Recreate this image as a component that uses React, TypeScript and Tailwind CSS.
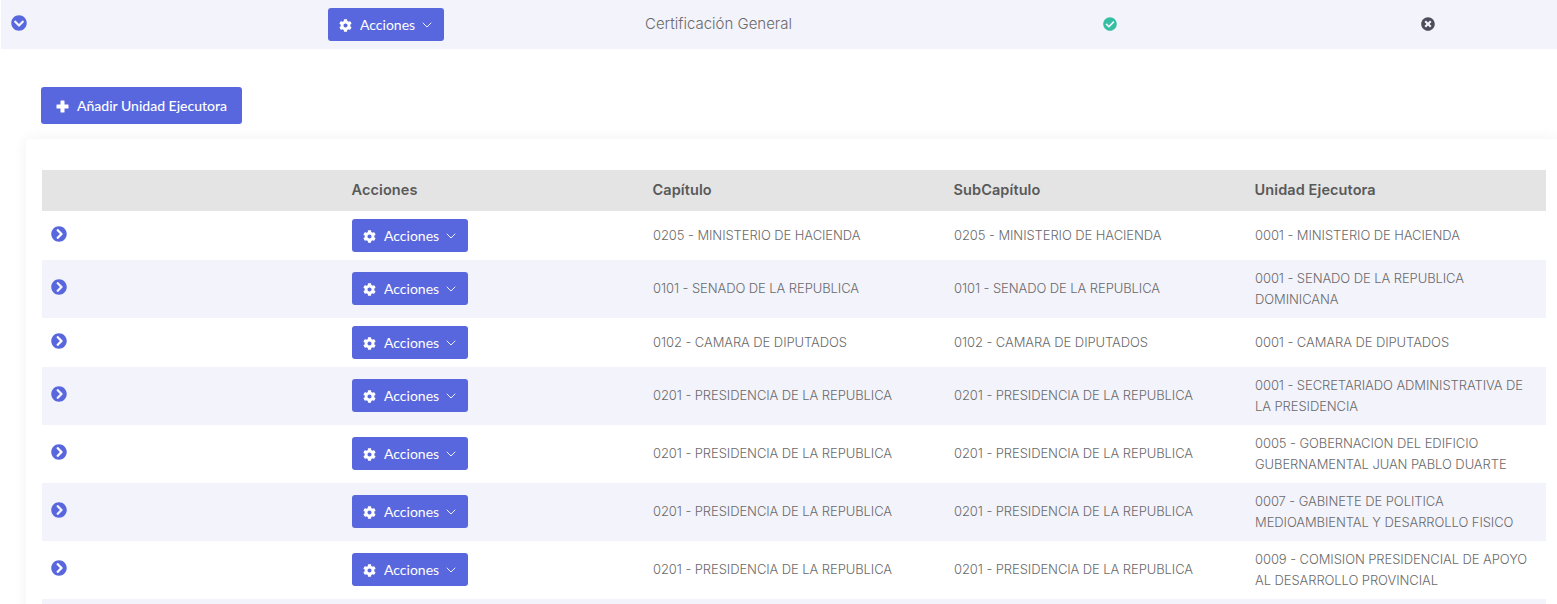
import { FaChevronCircleDown, FaChevronCircleRight, FaCheckCircle, FaTimesCircle, FaCog } from "react-icons/fa";
import { FiChevronDown } from "react-icons/fi";

const rows: { c: string; u: string[]; tall: boolean }[] = [
  { c: "0205 - MINISTERIO DE HACIENDA", u: ["0001 - MINISTERIO DE HACIENDA"], tall: false },
  { c: "0101 - SENADO DE LA REPUBLICA", u: ["0001 - SENADO DE LA REPUBLICA", "DOMINICANA"], tall: true },
  { c: "0102 - CAMARA DE DIPUTADOS", u: ["0001 - CAMARA DE DIPUTADOS"], tall: false },
  { c: "0201 - PRESIDENCIA DE LA REPUBLICA", u: ["0001 - SECRETARIADO ADMINISTRATIVA DE", "LA PRESIDENCIA"], tall: true },
  { c: "0201 - PRESIDENCIA DE LA REPUBLICA", u: ["0005 - GOBERNACION DEL EDIFICIO", "GUBERNAMENTAL JUAN PABLO DUARTE"], tall: true },
  { c: "0201 - PRESIDENCIA DE LA REPUBLICA", u: ["0007 - GABINETE DE POLITICA", "MEDIOAMBIENTAL Y DESARROLLO FISICO"], tall: true },
  { c: "0201 - PRESIDENCIA DE LA REPUBLICA", u: ["0009 - COMISION PRESIDENCIAL DE APOYO", "AL DESARROLLO PROVINCIAL"], tall: true },
];

function AccBtn() {
  return (
    <button className="flex items-center h-[33px] w-[116px] rounded-[3px] bg-[#5867dd] text-white pl-[11px] font-['Lato'] text-[14px]">
      <FaCog className="w-[13px] h-[13px] mt-[2px]" />
      <span className="ml-[8px]">Acciones</span>
      <FiChevronDown className="ml-[4px] w-[16px] h-[16px] opacity-90" strokeWidth={1.5} />
    </button>
  );
}

const cellText = "font-['Inter',sans-serif] font-light text-[13px] tracking-[-0.08px] text-[#6a6a6a] leading-[21px]";

export default function App() {
  return (
    <div className="h-[604px] w-full overflow-hidden bg-white">
      <div className="ml-[1px] h-[49px] bg-[#f3f3fb] grid grid-cols-[327px_317px_1fr_1fr_1fr] items-center">
        <div className="pl-[10px] -mt-[3px]">
          <FaChevronCircleDown className="w-[16px] h-[16px] text-[#5867dd]" />
        </div>
        <div><AccBtn /></div>
        <div className="font-['Inter',sans-serif] font-light text-[15px] text-[#6a6a6a] -mt-[1px]">Certificación General</div>
        <div className="pl-[154px] -mt-[2px]"><FaCheckCircle className="w-[14px] h-[14px] text-[#34bfa3]" /></div>
        <div className="pl-[168px] -mt-[2px]"><FaTimesCircle className="w-[14px] h-[14px] text-[#4b4d5c]" /></div>
      </div>

      <div className="pl-[41px] pt-[38px]">
        <button className="flex items-center h-[37px] w-[201px] rounded-[3px] bg-[#5867dd] text-white pl-[15px] font-['Lato'] text-[14px] font-medium">
          <svg viewBox="0 0 13 13" className="w-[13px] h-[13px] mt-[1px]" fill="currentColor">
            <path d="M5 0.5h3a.5.5 0 0 1 .5.5v3.500H12a.5.5 0 0 1 .5.5v3a.5.5 0 0 1-.5.5H8.500V12a.5.5 0 0 1-.5.5H5a.5.5 0 0 1-.5-.5V8.500H1a.5.5 0 0 1-.5-.5V5a.5.5 0 0 1 .5-.5h3.500V1a.5.5 0 0 1 .5-.5z" />
          </svg>
          <span className="ml-[8px]">Añadir Unidad Ejecutora</span>
        </button>
      </div>

      <div className="mt-[15px] ml-[26px] pt-[31px] pl-[16px] pr-[11px] bg-white rounded-tl-[4px] shadow-[0_0_13px_0_rgba(82,63,105,0.07)]">
        <table className="w-full table-fixed border-collapse">
          <thead>
            <tr className="h-[41px] bg-[#e4e4e4]">
              <th className="w-[300px]" />
              {["Acciones", "Capítulo", "SubCapítulo", "Unidad Ejecutora"].map((t) => (
                <th key={t} className="text-left pl-[9.5px] pb-[2px] font-['Inter',sans-serif] font-semibold text-[14.5px] tracking-[0.1px] text-[#595959]">{t}</th>
              ))}
            </tr>
          </thead>
          <tbody>
            {rows.map((r, i) => (
              <tr key={i} className={`${r.tall ? "h-[58px]" : "h-[49px]"} ${i % 2 === 1 ? "bg-[#f3f3fb]" : "bg-white"}`}>
                <td className={`align-top pl-[9px] ${r.tall ? "pt-[19px]" : "pt-[15px]"}`}>
                  <FaChevronCircleRight className="w-[16px] h-[16px] text-[#5867dd]" />
                </td>
                <td className={`align-top pl-[10px] ${r.tall ? "pt-[12px]" : "pt-[8px]"}`}><AccBtn /></td>
                <td className={`pl-[10px] ${cellText}`}><div className={r.tall ? "-mt-[1px]" : ""}>{r.c}</div></td>
                <td className={`pl-[10px] ${cellText}`}><div className={r.tall ? "-mt-[1px]" : ""}>{r.c}</div></td>
                <td className={`pl-[10px] ${cellText}`}>
                  {r.u.map((l) => <div key={l} className="whitespace-nowrap">{l}</div>)}
                </td>
              </tr>
            ))}
            <tr className="h-[20px] bg-[#f3f3fb]"><td colSpan={5} /></tr>
          </tbody>
        </table>
      </div>
    </div>
  );
}
